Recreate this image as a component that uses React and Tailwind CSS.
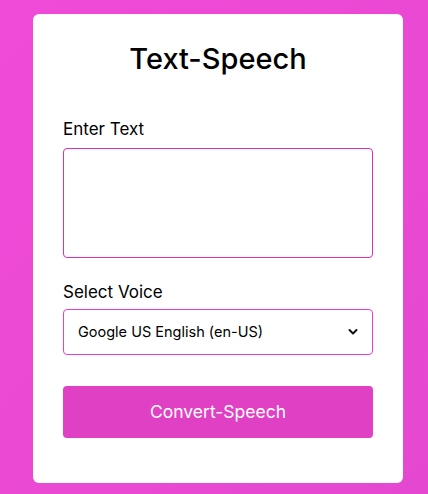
export default function App() {
  return (
    <div className="min-h-[494px] w-full bg-gradient-to-br from-[#f04ad8] to-[#e548d0] pt-[14px] pb-[12px] font-['Inter',sans-serif]">
      <div className="ml-[33px] w-[370px] rounded-[6px] bg-white px-[30px] pt-[25px] pb-[45px]">
        <h1 className="text-center text-[29px] font-medium leading-[40px] text-black">Text-Speech</h1>
        <div className="mt-[38px] text-[17px] leading-[24px] text-black">Enter Text</div>
        <textarea className="mt-[7px] block h-[110px] w-full resize-none rounded-[4px] border border-[#d92fc3] outline-none"></textarea>
        <div className="mt-[22px] text-[17px] leading-[24px] text-black">Select Voice</div>
        <div className="relative mt-[5px] flex h-[46px] w-full items-center rounded-[4px] border border-[#e83ee0] pl-[14px]">
          <span className="text-[14.5px] text-black">Google US English (en-US)</span>
          <svg className="absolute right-[14px] top-1/2 -translate-y-1/2" width="10" height="7" viewBox="0 0 10 7">
            <path d="M1.5 1.5 L5 5 L8.5 1.5" fill="none" stroke="#111" strokeWidth="2" strokeLinecap="round" strokeLinejoin="round" />
          </svg>
        </div>
        <button className="mt-[31px] flex h-[52px] w-full items-center justify-center rounded-[4px] bg-[#e040c4] text-[17.5px] text-white">Convert-Speech</button>
      </div>
    </div>
  );
}
